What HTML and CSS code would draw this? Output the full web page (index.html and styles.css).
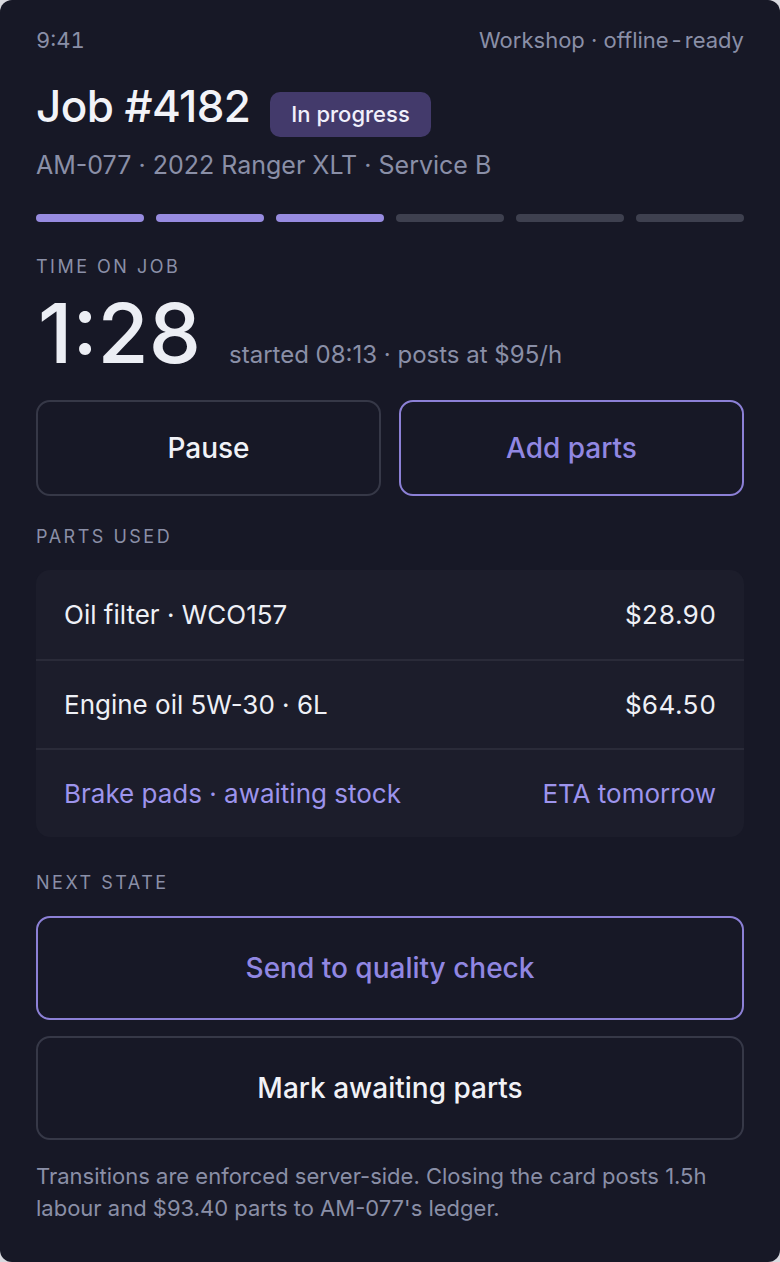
FILE: index.html
```html
<!DOCTYPE html>
<html lang="en">
<head>
<meta charset="utf-8">
<title>Job #4182</title>
<link rel="stylesheet" href="styles.css">
</head>
<body>
<main class="card">
  <div class="status">
    <span class="clock">9:41</span>
    <span>Workshop · offline<span class="hy">-</span>ready</span>
  </div>
  <div class="title-row">
    <h1 class="title">Job #4182</h1>
    <span class="badge">In progress</span>
  </div>
  <p class="subtitle">AM-077 · 2022 Ranger XLT · Service B</p>
  <div class="steps">
    <span class="step done"></span>
    <span class="step done"></span>
    <span class="step done"></span>
    <span class="step"></span>
    <span class="step"></span>
    <span class="step"></span>
  </div>
  <div class="label label-time">Time on job</div>
  <div class="timer-row">
    <span class="timer">1:28</span>
    <span class="timer-meta">started 08:13 · posts at $95/h</span>
  </div>
  <div class="actions">
    <button class="btn btn-neutral">Pause</button>
    <button class="btn btn-accent">Add parts</button>
  </div>
  <div class="label label-parts">Parts used</div>
  <ul class="parts">
    <li class="part"><span>Oil filter · WCO157</span><span class="price">$28.90</span></li>
    <li class="part"><span>Engine oil 5W-30 · 6L</span><span class="price">$64.50</span></li>
    <li class="part pending"><span>Brake pads · awaiting stock</span><span>ETA tomorrow</span></li>
  </ul>
  <div class="label label-next">Next state</div>
  <div class="transitions">
    <button class="btn btn-accent btn-tall">Send to quality check</button>
    <button class="btn btn-neutral btn-tall">Mark awaiting parts</button>
  </div>
  <p class="note">Transitions are enforced server-side. Closing the card posts 1.5h labour and $93.40 parts to AM-077's ledger.</p>
</main>
</body>
</html>
```

FILE: styles.css
```css
* {
  box-sizing: border-box;
}

html, body {
  margin: 0;
  padding: 0;
  background: #d9d9df;
}

body {
  font-family: "Inter", "Noto Sans", sans-serif;
  color: #eef0f6;
}

.card {
  width: 780px;
  height: 1262px;
  background: #171826;
  border-radius: 12px;
  padding: 28px 36px 0;
  overflow: hidden;
}

.status {
  display: flex;
  justify-content: space-between;
  font-size: 22px;
  line-height: 24px;
  color: #8a8fa7;
}

.clock {
  font-variant-numeric: tabular-nums;
}

.hy {
  padding: 0 3px;
}

.title-row {
  display: flex;
  align-items: baseline;
  gap: 20px;
  margin-top: 30px;
}

.title {
  margin: 0;
  font-size: 44px;
  line-height: 48px;
  font-weight: 500;
  color: #f2f3f8;
  letter-spacing: -0.6px;
}

.badge {
  display: inline-block;
  background: #433a6b;
  color: #f1f0fb;
  font-size: 22px;
  line-height: 25px;
  padding: 10px 21.5px 10px 21px;
  border-radius: 10px;
  font-weight: 500;
}

.subtitle {
  margin: 12px 0 0;
  font-size: 25px;
  line-height: 32px;
  color: #8a8fa7;
}

.steps {
  display: grid;
  grid-template-columns: repeat(6, 1fr);
  gap: 12px;
  margin-top: 33px;
}

.step {
  height: 8px;
  border-radius: 4px;
  background: #3e404f;
}

.step.done {
  background: #978be0;
}

.label {
  font-size: 18px;
  line-height: 22px;
  letter-spacing: 2.5px;
  text-transform: uppercase;
  color: #8a8fa7;
}

.label-time {
  margin-top: 34px;
}

.timer-row {
  display: flex;
  align-items: baseline;
  gap: 28px;
  margin-top: 15px;
}

.timer {
  font-size: 83px;
  line-height: 80px;
  font-weight: 500;
  color: #eceef4;
  padding-left: 2px;
}

.timer-meta {
  font-size: 24px;
  color: #8a8fa7;
}

.actions {
  display: grid;
  grid-template-columns: 1fr 1fr;
  gap: 18px;
  margin-top: 27px;
}

.btn {
  font-family: inherit;
  background: transparent;
  border-radius: 14px;
  height: 96px;
  font-size: 28px;
  font-weight: 500;
  cursor: pointer;
}

.btn-neutral {
  border: 2px solid #363847;
  color: #f1f2f7;
}

.btn-accent {
  border: 2px solid #8c80d6;
  color: #9187e2;
}

.label-parts {
  margin-top: 30px;
}

.parts {
  list-style: none;
  margin: 22px 0 0;
  padding: 0;
  background: #1c1d2b;
  border-radius: 14px;
}

.part {
  display: flex;
  justify-content: space-between;
  align-items: center;
  height: 89px;
  padding: 0 28px;
  font-size: 26px;
  color: #eef0f6;
}

.part + .part {
  border-top: 2px solid #2a2b39;
}

.price {
  font-variant-numeric: tabular-nums;
}

.part.pending {
  color: #9d94ec;
}

.label-next {
  margin-top: 35px;
}

.transitions {
  display: flex;
  flex-direction: column;
  gap: 16px;
  margin-top: 22px;
}

.btn-tall {
  width: 100%;
  height: 104px;
}

.note {
  margin: 20px 0 0;
  font-size: 22px;
  line-height: 32px;
  color: #8a8fa7;
}
```
